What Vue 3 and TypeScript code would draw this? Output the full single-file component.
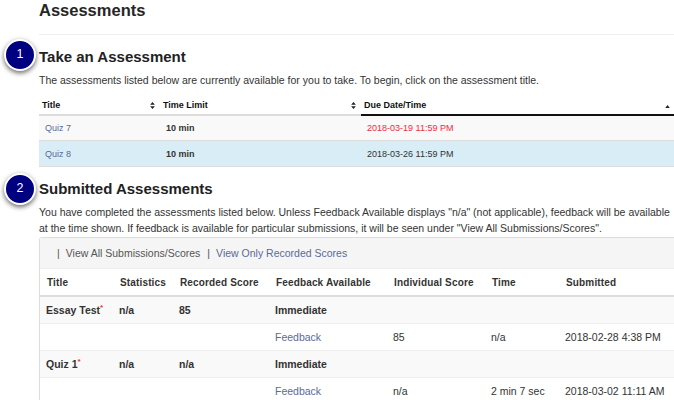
<script setup lang="ts">
const takeRows = [
  { title: 'Quiz 7', limit: '10 min', due: '2018-03-19 11:59 PM', late: true, info: false },
  { title: 'Quiz 8', limit: '10 min', due: '2018-03-26 11:59 PM', late: false, info: true },
]
const heads = ['Title', 'Statistics', 'Recorded Score', 'Feedback Available', 'Individual Score', 'Time', 'Submitted']
const groups = [
  { title: 'Essay Test', stats: 'n/a', rec: '85', fb: 'Immediate', ind: '85', time: 'n/a', sub: '2018-02-28 4:38 PM' },
  { title: 'Quiz 1', stats: 'n/a', rec: 'n/a', fb: 'Immediate', ind: 'n/a', time: '2 min 7 sec', sub: '2018-03-02 11:11 AM' },
]
</script>

<template>
  <div class="page">
    <h1 class="title">Assessments</h1>
    <hr class="rule" />

    <section class="sec first">
      <span class="badge">1</span>
      <h2>Take an Assessment</h2>
      <p class="lead">The assessments listed below are currently available for you to take. To begin, click on the assessment title.</p>
      <table class="take">
        <colgroup><col class="c1" /><col class="c2" /><col /></colgroup>
        <thead>
          <tr>
            <th>Title<svg class="sort" viewBox="0 0 6 9"><path d="M3 0 6 3.6H0zM3 9 0 5.4h6z" /></svg></th>
            <th>Time Limit<svg class="sort" viewBox="0 0 6 9"><path d="M3 0 6 3.6H0zM3 9 0 5.4h6z" /></svg></th>
            <th class="active">Due Date/Time<svg class="sort up" viewBox="0 0 6 4"><path d="M3 0 6 4H0z" /></svg></th>
          </tr>
        </thead>
        <tbody>
          <tr v-for="r in takeRows" :key="r.title" :class="{ info: r.info }">
            <td class="lnk">{{ r.title }}</td>
            <td class="lim">{{ r.limit }}</td>
            <td class="due" :class="{ late: r.late }">{{ r.due }}</td>
          </tr>
        </tbody>
      </table>
    </section>

    <section class="sec second">
      <span class="badge">2</span>
      <h2>Submitted Assessments</h2>
      <p class="lead two">You have completed the assessments listed below. Unless Feedback Available displays "n/a" (not applicable), feedback will be available<br />at the time shown. If feedback is available for particular submissions, it will be seen under "View All Submissions/Scores".</p>
      <div class="panel">
        <div class="bar">
          <span class="sep">|</span><span class="cur">View All Submissions/Scores</span><span class="sep">|</span><span class="lnk">View Only Recorded Scores</span>
        </div>
        <table class="sub">
          <colgroup><col class="s1" /><col class="s2" /><col class="s3" /><col class="s4" /><col class="s5" /><col class="s6" /><col class="s7" /></colgroup>
          <thead>
            <tr><th v-for="h in heads" :key="h">{{ h }}</th></tr>
          </thead>
          <tbody>
            <template v-for="g in groups" :key="g.title">
              <tr class="grp">
                <td>{{ g.title }}<sup>*</sup></td>
                <td>{{ g.stats }}</td>
                <td>{{ g.rec }}</td>
                <td>{{ g.fb }}</td>
                <td></td><td></td><td></td>
              </tr>
              <tr class="det">
                <td></td><td></td><td></td>
                <td class="lnk">Feedback</td>
                <td>{{ g.ind }}</td>
                <td>{{ g.time }}</td>
                <td>{{ g.sub }}</td>
              </tr>
            </template>
          </tbody>
        </table>
      </div>
    </section>
  </div>
</template>

<style>
html, body { overflow: hidden; background: #fff; }
</style>

<style scoped>
.page {
  width: 674px;
  height: 400px;
  overflow: hidden;
  box-sizing: border-box;
  padding-left: 39px;
  font-family: "Liberation Sans", Arial, sans-serif;
  font-size: 10.5px;
  color: #333;
}
.title { margin: 0; font-size: 16.5px; line-height: 20px; font-weight: 700; color: #262626; }
.rule { margin: 14px 0 0; border: 0; border-top: 1px solid #eee; }
.sec { position: relative; }
.first { padding-top: 12px; }
.second { padding-top: 12px; }
h2 { margin: 0; font-size: 15px; line-height: 20px; font-weight: 700; color: #222; }
.lead { margin: 5px 0 0; line-height: 16px; color: #333; }
.lead.two { margin-top: 5px; white-space: nowrap; }
.badge {
  position: absolute;
  left: -35px;
  top: 4px;
  width: 32px;
  height: 32px;
  box-sizing: border-box;
  border: 2px solid #fff;
  border-radius: 50%;
  background: #000080;
  color: #fff;
  font-size: 12.5px;
  line-height: 27px;
  text-align: center;
  box-shadow: 0 2px 5px rgba(0, 0, 0, .6);
}
.second .badge { top: 6px; }
table { border-collapse: collapse; table-layout: fixed; }
.take { width: 635px; margin-top: 6px; }
.c1 { width: 121px; }
.c2 { width: 201px; }
.take th {
  position: relative;
  height: 18px;
  padding: 2px 0 0 3px;
  text-align: left;
  font-size: 9px;
  font-weight: 700;
  color: #111;
  border-bottom: 2px solid #ddd;
}
.take th.active { border-bottom-color: #111; }
.sort { position: absolute; right: 5px; top: 8px; width: 5px; height: 7px; fill: #222; }
.sort.up { right: 4px; top: 11px; width: 5px; height: 3px; }
.take td { height: 24px; padding: 0 0 0 6px; border-bottom: 1px solid #ddd; font-size: 9px; background: #f9f9f9; }
.take .info td { height: 25px; background: #d9edf7; border-bottom: 1px solid #ddd; }
.take .lim { font-weight: 700; color: #333; }
.lnk { color: #5a6a99; }
.late { color: #f8283c; }
.panel { margin-top: 1px; width: 660px; border: 1px solid #ddd; border-radius: 3px 3px 0 0; border-right: 0; }
.bar { height: 30px; background: #f5f5f5; line-height: 30px; padding-left: 17px; border-bottom: 1px solid #eee; white-space: nowrap; }
.sep { color: #555; margin-right: 6px; }
.cur { color: #555; margin-right: 7px; }
.sub { width: 660px; }
.s1 { width: 73px; } .s2 { width: 60px; } .s3 { width: 96px; } .s4 { width: 118px; } .s5 { width: 98px; } .s6 { width: 74px; } .s7 { width: 141px; }
.sub th { height: 26px; padding: 0 0 0 7px; text-align: left; font-size: 10px; font-weight: 700; color: #333; border-bottom: 2px solid #ddd; letter-spacing: .15px; }
.sub td { height: 26px; padding: 0 0 0 6px; border-bottom: 1px solid #eee; white-space: nowrap; }
.grp td { background: #f9f9f9; font-weight: 700; }
.grp sup { color: #e33; font-size: 8px; line-height: 0; }
</style>
